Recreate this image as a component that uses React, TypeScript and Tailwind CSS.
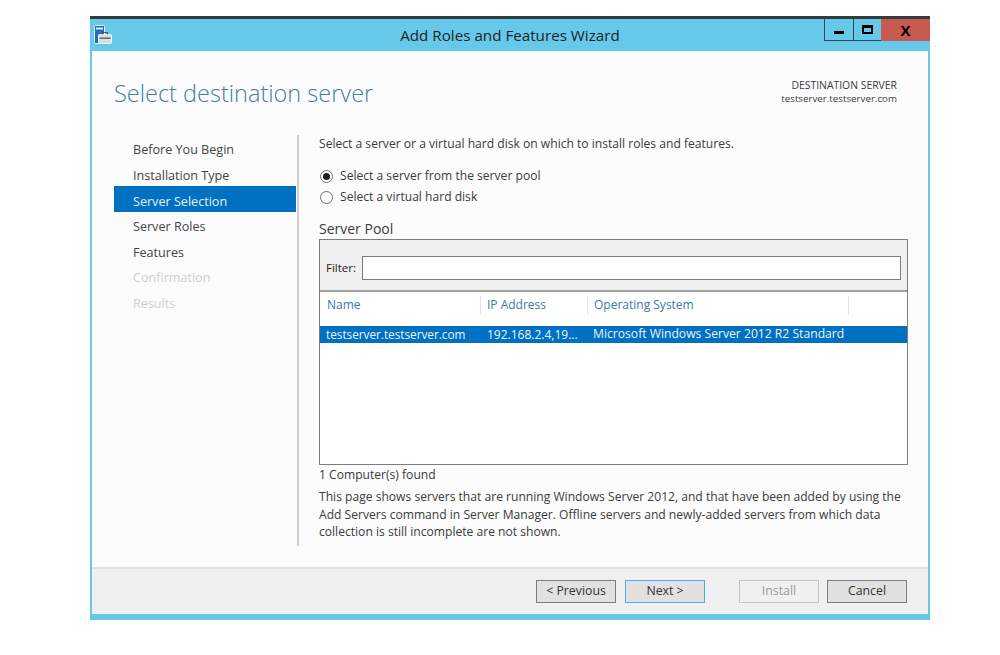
const steps = [
  { label: 'Before You Begin', state: 'normal' },
  { label: 'Installation Type', state: 'normal' },
  { label: 'Server Selection', state: 'active' },
  { label: 'Server Roles', state: 'normal' },
  { label: 'Features', state: 'normal' },
  { label: 'Confirmation', state: 'disabled' },
  { label: 'Results', state: 'disabled' },
];

function WizardIcon() {
  return (
    <svg width="18" height="19" viewBox="0 0 18 19" className="block">
      <rect x="0.5" y="0.5" width="10" height="18" rx="1" fill="#1f6fb8" stroke="#eaf6fb" />
      <rect x="2" y="2.5" width="7" height="2" fill="#dff1fa" />
      <rect x="4.5" y="9.5" width="13" height="9" rx="1" fill="#d8dde0" stroke="#f4f8fa" />
      <rect x="5.5" y="12.5" width="11" height="1.5" fill="#5d6b75" />
      <path d="M8.5 9.5V7.5h5v2" fill="none" stroke="#4f5d68" strokeWidth="1.2" />
    </svg>
  );
}

function Radio({ checked }: { checked?: boolean }) {
  return (
    <span className="w-[13px] h-[13px] rounded-full border border-[#6f6f6f] bg-white flex items-center justify-center">
      {checked && <span className="w-[7px] h-[7px] rounded-full bg-[#1c1c1c]" />}
    </span>
  );
}

function WizardButton({ label, variant }: { label: string; variant?: 'default' | 'disabled' }) {
  const tone =
    variant === 'default'
      ? 'border-[#5ea6dc] bg-[#e1e1e1] text-[#333]'
      : variant === 'disabled'
        ? 'border-[#c4c4c4] bg-[#f0f0f0] text-[#9b9b9b]'
        : 'border-[#7d7d7d] bg-[#e1e1e1] text-[#333]';
  return (
    <button className={`w-[80px] h-[23px] border text-[12.3px] flex items-center justify-center ${tone}`}>
      {label}
    </button>
  );
}

export default function App() {
  return (
    <div
      className="w-[1000px] h-[655px] bg-white pt-4 pl-[90px] overflow-hidden text-[#3b3b3b]"
      style={{ fontFamily: '"Open Sans", "Noto Sans", sans-serif' }}
    >
      <div className="w-[840px] h-[604px] border-t-[3px] border-[#343b3e] bg-[#66c9ea] flex flex-col">
        <div className="h-[32px] flex shrink-0">
          <div className="w-[128px] pl-1 pt-[6px]">
            <WizardIcon />
          </div>
          <div className="w-[584px] text-center text-[15.2px] text-[#1f1f1f] pt-[5px]">
            Add Roles and Features Wizard
          </div>
          <div className="flex h-[22px] ml-auto">
            <div className="w-[29px] border-l border-b border-[#2c4a5a] flex items-center justify-center">
              <span className="w-[10px] h-[3px] bg-black mt-[5px]" />
            </div>
            <div className="w-[28px] border-l border-b border-[#2c4a5a] flex items-center justify-center">
              <span className="w-[11px] h-[9px] border-2 border-black border-t-[3px]" />
            </div>
            <div className="w-[49px] bg-[#c75b50] flex items-center justify-center text-[15px] font-bold text-black leading-none">
              X
            </div>
          </div>
        </div>

        <div className="flex-1 mx-[2px] mb-[6px] bg-[#fcfcfc] flex flex-col min-h-0">
          <div className="h-[84px] shrink-0 flex justify-between pl-[22px] pr-[31px]">
            <h1 className="text-[23.5px] font-light text-[#3f7f9f] pt-[23px] leading-[38px]">Select destination server</h1>
            <div className="text-right leading-[14px] pt-[27px] text-[#3b3b3b]">
              <div className="text-[10.4px]">DESTINATION SERVER</div>
              <div className="text-[9.75px]">testserver.testserver.com</div>
            </div>
          </div>

          <div className="flex-1 flex pl-[22px] min-h-0">
            <nav className="w-[183px] h-[411px] border-r-2 border-[#d0d0d0] text-[12.6px] shrink-0 box-content">
              {steps.map(step => (
                <div
                  key={step.label}
                  className={`h-[25.6px] pl-[19px] pt-[6px] flex items-center ${
                    step.state === 'active'
                      ? 'bg-[#0070c0] text-[#e6f0f8] mr-[1px]'
                      : step.state === 'disabled'
                        ? 'text-[#cfcfcf]'
                        : 'text-[#444]'
                  }`}
                >
                  {step.label}
                </div>
              ))}
            </nav>

            <div className="w-[589px] ml-[20px] text-[12.1px]">
              <p className="leading-[18px] h-[18px]">Select a server or a virtual hard disk on which to install roles and features.</p>
              <div className="mt-[14px] flex flex-col gap-[3px] pl-[1px]">
                <label className="flex items-center gap-[7px] h-[18px]">
                  <Radio checked />
                  Select a server from the server pool
                </label>
                <label className="flex items-center gap-[7px] h-[18px]">
                  <Radio />
                  Select a virtual hard disk
                </label>
              </div>
              <div className="mt-[14px] text-[14px] leading-[18px] h-[18px]">Server Pool</div>

              <div className="mt-[1px] w-[589px] h-[226px] border border-[#7d7d7d] bg-white flex flex-col">
                <div className="h-[52px] bg-[#f0f0f0] border-b-2 border-[#a0a0a0] flex items-start pt-[16px] pl-[6px] pr-[6px] shrink-0">
                  <span className="w-[35px] text-[11.5px] leading-[24px] text-[#222] font-medium">Filter:</span>
                  <div className="w-[539px] h-[24px] ml-[1px] border border-[#7d7d7d] bg-white" />
                </div>
                <div className="flex h-[23px] text-[12px] text-[#3a78b5] shrink-0 pt-[4px]">
                  <div className="w-[161px] pl-[7px] border-r border-[#e3e3e3]">Name</div>
                  <div className="w-[107px] pl-[6px] border-r border-[#e3e3e3] whitespace-nowrap">IP Address</div>
                  <div className="w-[261px] pl-[6px] border-r border-[#e3e3e3]">Operating System</div>
                </div>
                <div className="mt-[11px] h-[17px] bg-[#0070c0] text-[#eef5fb] flex items-center text-[12px] shrink-0">
                  <div className="w-[167px] pl-[6px] whitespace-nowrap text-[11.75px]">testserver.testserver.com</div>
                  <div className="w-[106px] whitespace-nowrap">192.168.2.4,19...</div>
                  <div className="whitespace-nowrap text-[12.15px]">Microsoft Windows Server 2012 R2 Standard</div>
                </div>
              </div>

              <div className="mt-[1px] leading-[18px] h-[18px]">1 Computer(s) found</div>
              <p className="mt-[4px] leading-[17.5px] w-[589px]">
                This page shows servers that are running Windows Server 2012, and that have been added by using the
                Add Servers command in Server Manager. Offline servers and newly-added servers from which data
                collection is still incomplete are not shown.
              </p>
            </div>
          </div>

          <div className="h-[47px] shrink-0 border-t-2 border-[#e0e0e0] bg-[#f0f0f0] flex items-center pl-[444px]">
            <WizardButton label="< Previous" />
            <div className="ml-[9px]">
              <WizardButton label="Next >" variant="default" />
            </div>
            <div className="ml-[34px]">
              <WizardButton label="Install" variant="disabled" />
            </div>
            <div className="ml-[8px]">
              <WizardButton label="Cancel" />
            </div>
          </div>
        </div>
      </div>
    </div>
  );
}
